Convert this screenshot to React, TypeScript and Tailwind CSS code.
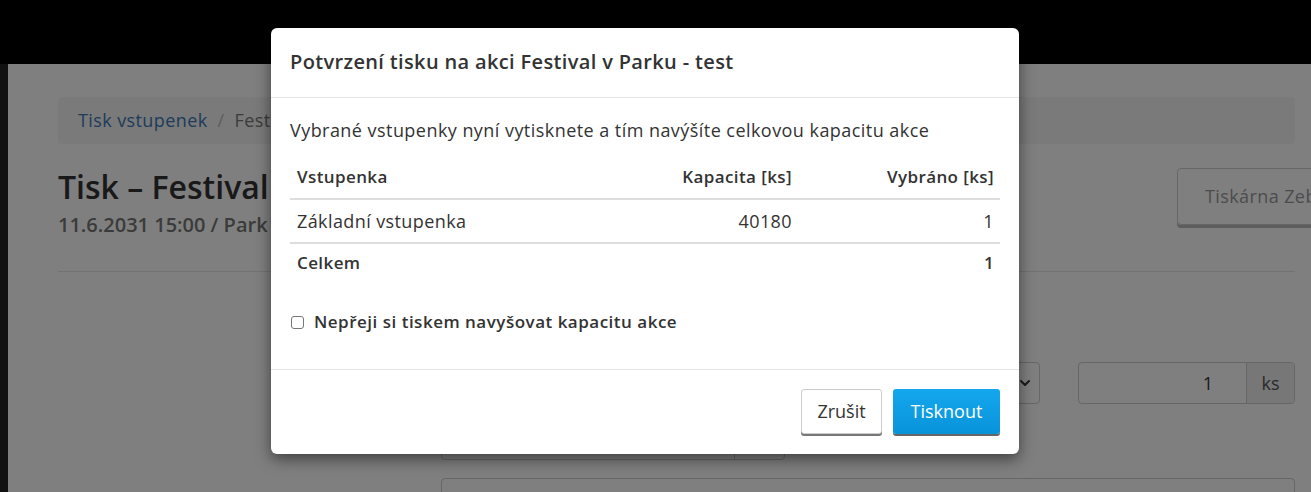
import { ChevronDown } from 'lucide-react'

const FONT = "font-['Open_Sans','Lato',sans-serif]"

function Background() {
  return (
    <div className="flex h-full flex-col">
      <div className="h-[64px] shrink-0 bg-black" />
      <div className="flex flex-1">
        <div className="w-[8px] bg-[#222]" />
        <div className="flex-1 bg-white pl-[50px] pr-[16px] pt-[33px]">
          <div className="flex h-[47px] items-center rounded-[4px] bg-[#f4f4f4] px-[20px] text-[18px] tracking-[0.4px]">
            <span className="text-[#3d78b5]">Tisk vstupenek</span>
            <span className="px-[10px] text-[#bbb]">/</span>
            <span className="text-[#777]">Festival v Parku - test</span>
          </div>

          <div className="flex items-start justify-between pt-[24px]">
            <div>
              <h1 className="text-[32px] font-semibold leading-[38px] text-[#333]">
                Tisk – Festival v Parku - test
              </h1>
              <p className="mt-[6px] text-[20px] font-semibold leading-[26px] text-[#777]">
                11.6.2031 15:00 / Park
              </p>
            </div>
            <button className="mr-[-56px] h-[57px] w-[174px] rounded-[4px] border border-[#ccc] pl-[27px] text-left text-[18px] tracking-[0.4px] whitespace-nowrap text-[#999] shadow-[0_3px_0_#bbb]">
              Tiskárna Zebra
            </button>
          </div>

          <div className="mt-[33px] h-px bg-[#e5e5e5]" />

          <div className="ml-[383px] mt-[90px] flex gap-[38px]">
            <div className="flex h-[42px] w-[599px] items-center justify-end rounded-[4px] border border-[#ccc] pr-[6px]">
              <ChevronDown className="h-[16px] w-[16px] text-[#333]" strokeWidth={3} />
            </div>
            <div className="flex h-[42px] w-[217px] overflow-hidden rounded-[4px] border border-[#ccc] text-[18px]">
              <div className="flex flex-1 items-center justify-end pr-[33px] text-[#333]">1</div>
              <div className="flex w-[48px] items-center justify-center border-l border-[#ccc] bg-[#eee] text-[#555]">
                ks
              </div>
            </div>
          </div>

          <div className="ml-[383px] mt-[12px] flex h-[44px] w-[344px] rounded-[4px] border border-[#ccc]">
            <div className="flex-1" />
            <div className="w-[50px] border-l border-[#ccc]" />
          </div>

          <div className="ml-[383px] mt-[18px] h-[60px] rounded-[4px] border border-[#ccc]" />
        </div>
      </div>
    </div>
  )
}

function ConfirmModal() {
  return (
    <div className="absolute left-[271px] top-[28px] w-[748px] rounded-[6px] bg-white text-[#333] shadow-[0_5px_15px_rgba(0,0,0,0.5)]">
      <div className="border-b border-[#e5e5e5] px-[19px] pb-[21px] pt-[20px]">
        <h4 className="text-[20px] font-semibold leading-[28px] tracking-[0.35px]">
          Potvrzení tisku na akci Festival v Parku - test
        </h4>
      </div>

      <div className="px-[19px] pb-[35px] pt-[20px]">
        <p className="text-[18px] leading-[24px] tracking-[0.45px]">
          Vybrané vstupenky nyní vytisknete a tím navýšíte celkovou kapacitu akce
        </p>

        <table className="mt-[17px] w-full text-[17px] leading-[24px]">
          <thead>
            <tr className="border-b-2 border-[#ddd] tracking-[0.4px]">
              <th className="px-[7px] pb-[9px] pt-[6px] text-left font-semibold">Vstupenka</th>
              <th className="w-[300px] px-[6px] pb-[9px] pt-[6px] text-right font-semibold">Kapacita [ks]</th>
              <th className="w-[202px] px-[6px] pb-[9px] pt-[6px] text-right font-semibold">Vybráno [ks]</th>
            </tr>
          </thead>
          <tbody>
            <tr className="border-b-2 border-[#ddd] text-[18px] tracking-[0.4px]">
              <td className="px-[7px] py-[9px]">Základní vstupenka</td>
              <td className="px-[6px] py-[9px] text-right">40180</td>
              <td className="px-[6px] py-[9px] text-right">1</td>
            </tr>
            <tr className="font-semibold tracking-[0.4px]">
              <td className="px-[7px] pb-[9px] pt-[7px]">Celkem</td>
              <td className="px-[6px] pb-[9px] pt-[7px]" />
              <td className="px-[6px] pb-[9px] pt-[7px] text-right">1</td>
            </tr>
          </tbody>
        </table>

        <label className="mt-[26px] flex items-center gap-[10px] text-[17px] font-semibold leading-[24px] tracking-[0.5px]">
          <span className="ml-[1px] h-[13px] w-[13px] rounded-[3px] border border-[#767676] bg-white" />
          Nepřeji si tiskem navyšovat kapacitu akce
        </label>
      </div>

      <div className="flex justify-end gap-[11px] border-t border-[#e5e5e5] px-[19px] pb-[20px] pt-[19px]">
        <button className="h-[45px] w-[81px] rounded-[3px] border border-[#ccc] bg-white text-[18px] text-[#333] shadow-[0_2px_0_#777]">
          Zrušit
        </button>
        <button className="h-[45px] w-[107px] rounded-[3px] bg-gradient-to-b from-[#14a7ee] to-[#0893d9] text-[18px] text-white shadow-[0_2px_0_#666]">
          Tisknout
        </button>
      </div>
    </div>
  )
}

export default function App() {
  return (
    <div className={`relative h-[492px] w-[1311px] overflow-hidden ${FONT}`}>
      <Background />
      <div className="absolute inset-0 bg-black/50" />
      <ConfirmModal />
    </div>
  )
}
